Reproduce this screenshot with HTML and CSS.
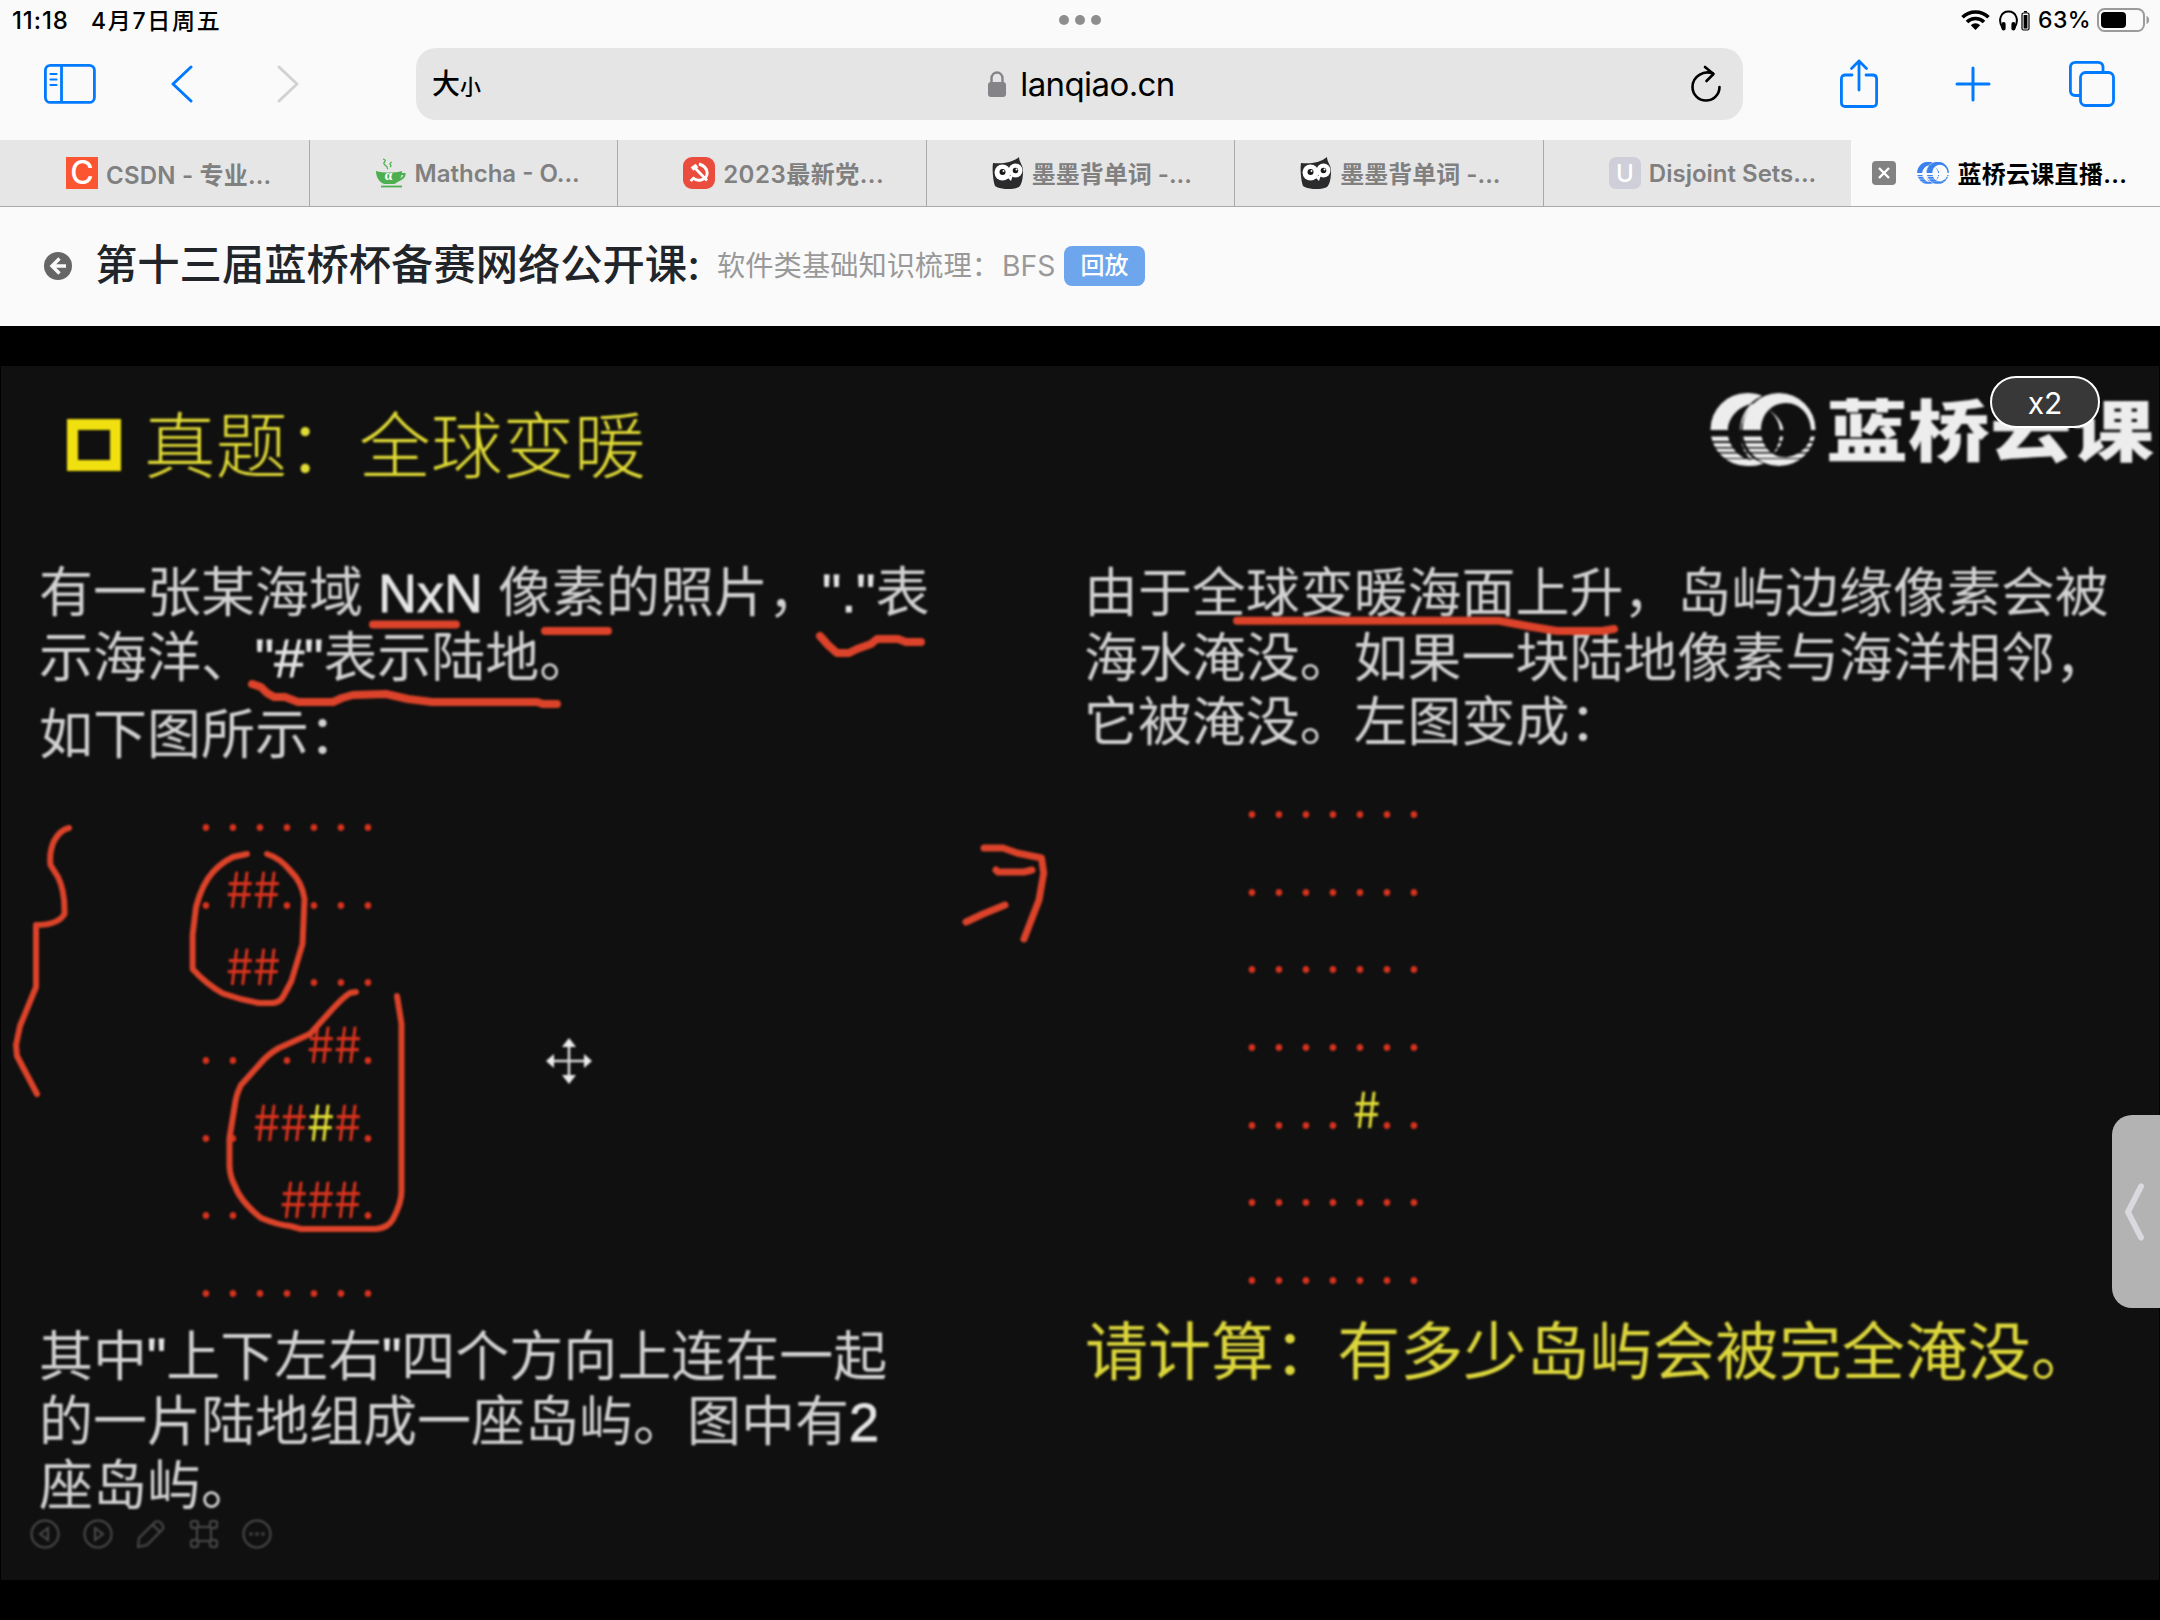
FILE: index.html
```html
<!DOCTYPE html>
<html lang="zh-CN">
<head>
<meta charset="utf-8">
<title>蓝桥云课直播</title>
<link rel="stylesheet" href="styles.css">
</head>
<body>
<svg class="defs" width="0" height="0" aria-hidden="true">
  <defs>
    <mask id="waves" maskUnits="userSpaceOnUse" x="0" y="0" width="106" height="74">
      <path fill="#fff" d="M0 0H106V37H0zM0 43.500H106V48H0zM0 50H106V54H0zM0 55.500H106V59H0zM0 60.500H106V65H0zM0 66H106V74H0z"/>
    </mask>
    <symbol id="rings" viewBox="0 0 106 74">
      <g mask="url(#waves)" fill="currentColor" fill-rule="evenodd">
        <path d="M37 0C43 0 49 1 52 3C38 9 30 22 30 37C30 53 38 66 54 70C48 73 43 73 37 73A36.500 36.500 0 0 1 37 0zM48 10C30 12 18 24 18 37C18 53 30 67 42 67C26 56 26 20 48 10z" fill-rule="nonzero"/>
        <path d="M69 0A36.500 36.500 0 1 1 69 73A36.500 36.500 0 1 1 69 0zM76 10C61 10 51 22 51 37C51 55 64 66 78 64C94 61 101 50 101 38C101 22 90 10 76 10z"/>
        <path d="M59 17C68 23 74 32 73.500 40C73 50 69 56 63 61C68 54 70 47 70 39C70 30 66 23 59 17z"/>
      </g>
      <path d="M18 37C19 24 28 14 41 11C34 18 30 27 30 37zM18 43C20 53 26 60 33 63C31 57 30 50 30 43z" fill="var(--hole)"/>
    </symbol>
    <symbol id="owl" viewBox="0 0 32 32">
      <path fill="#2b2b2d" d="M1 6C10 7 20 6 27 0C27 5 31 8 31 14C31 21 30 27 27 30C21 33 9 33 3 29C1 24 0 12 1 6z"/>
      <circle cx="10.500" cy="15.500" r="8" fill="#fff"/><circle cx="23.500" cy="13.500" r="7" fill="#fff"/>
      <path fill="#fff" d="M15 20L21 18L19 24z"/>
      <circle cx="10.500" cy="15" r="3" fill="#18181a"/><circle cx="23.500" cy="13.500" r="2.800" fill="#18181a"/>
      <circle cx="11.500" cy="14" r="1" fill="#fff"/><circle cx="24.500" cy="12.500" r="1" fill="#fff"/>
    </symbol>
  </defs>
</svg>

<header class="status">
  <span class="clock">11:18</span>
  <span class="date">4月7日周五</span>
  <span class="multitask"><i></i><i></i><i></i></span>
  <span class="indicators">
    <svg width="29" height="20" viewBox="0 0 29 20" fill="none" stroke="#000" stroke-width="3.600"><path d="M1.500 7.300A18.500 18.500 0 0 1 27.500 7.300M6 12A12 12 0 0 1 23 12"/><path d="M14.500 20L9.800 15.200A6.700 6.700 0 0 1 19.200 15.200z" fill="#000" stroke="none"/></svg>
    <svg class="phones" width="31" height="21" viewBox="0 0 31 21"><path d="M3.500 18C-1.500 10 2 1.500 9.500 1.500S20.500 10 15.500 18" fill="none" stroke="#000" stroke-width="2"/><rect x="2.600" y="12" width="4" height="8.500" rx="2"/><rect x="12.400" y="12" width="4" height="8.500" rx="2"/><rect x="23" y="3" width="7" height="17" rx="1.500" fill="none" stroke="#000" stroke-width="1.200"/><rect x="24.600" y="5" width="3.800" height="13.500"/><rect x="25" y="1" width="3" height="1.500"/></svg>
    <span class="percent">63%</span>
    <svg class="battery" width="53" height="24" viewBox="0 0 53 24"><rect x="1" y="1" width="46" height="22" rx="6.500" fill="none" stroke="#9b9b9b" stroke-width="2"/><rect x="4" y="4" width="25" height="16" rx="4"/><path d="M49.500 8C53 9 53 15 49.500 16z" fill="#9b9b9b"/></svg>
  </span>
</header>

<nav class="toolbar">
  <svg class="t-side" width="52" height="40" viewBox="0 0 52 40" fill="none" stroke="#007aff" stroke-width="2.800"><rect x="1.400" y="1.400" width="49" height="37" rx="5"/><path d="M17.500 1.400V38.400"/><path d="M6.500 10H12.500M6.500 15.500H12.500M6.500 21H12.500" stroke-width="2.200" stroke-linecap="round"/></svg>
  <svg class="t-back" width="22" height="38" viewBox="0 0 22 38" fill="none" stroke="#007aff" stroke-width="3" stroke-linecap="round" stroke-linejoin="round"><path d="M20 2L2 19L20 36"/></svg>
  <svg class="t-next" width="22" height="38" viewBox="0 0 22 38" fill="none" stroke="#d2d2d2" stroke-width="3" stroke-linecap="round" stroke-linejoin="round"><path d="M2 2L20 19L2 36"/></svg>
  <div class="address">
    <span class="size"><b>大</b><small>小</small></span>
    <span class="host"><svg width="18" height="26" viewBox="0 0 18 26"><rect y="11" width="18" height="15" rx="3" fill="#848488"/><path d="M3.500 12V7.500C3.500 -.5 14.500 -.5 14.500 7.500V12" fill="none" stroke="#848488" stroke-width="2.400"/></svg><em>lanqiao.cn</em></span>
    <svg class="reload" width="32" height="38" viewBox="0 0 32 38" fill="none" stroke="#000" stroke-width="2.600" stroke-linecap="round" stroke-linejoin="round"><path d="M23 8.500C14 5 2.500 11 2.500 22A13.500 13.500 0 0 0 29.500 22"/><path d="M15 2L23.500 9L16.500 16"/></svg>
  </div>
  <svg class="t-share" width="38" height="50" viewBox="0 0 38 50" fill="none" stroke="#007aff" stroke-width="2.800" stroke-linecap="round" stroke-linejoin="round"><path d="M12 16H5.400Q1.400 16 1.400 20V43.500Q1.400 47.500 5.400 47.500H32.600Q36.600 47.500 36.600 43.500V20Q36.600 16 32.600 16H26M19 31V2M11.500 9.500L19 2L26.500 9.500"/></svg>
  <svg class="t-add" width="36" height="36" viewBox="0 0 36 36" stroke="#007aff" stroke-width="3" stroke-linecap="round"><path d="M18 2V34M2 18H34"/></svg>
  <svg class="t-tabs" width="46" height="46" viewBox="0 0 46 46" fill="none" stroke="#007aff" stroke-width="2.800"><path d="M11 34.500H6.500Q1.400 34.500 1.400 29.500V6.500Q1.400 1.400 6.500 1.400H29Q34 1.400 34 6.500V11"/><rect x="11.500" y="11.500" width="33" height="33" rx="5"/></svg>
</nav>

<div class="tabs">
  <div class="tab"><span class="fav csdn">C</span><span class="name n1">CSDN - 专业...</span></div>
  <div class="tab"><svg class="fav" viewBox="0 0 32 32"><g fill="none" stroke="#4caf50"><path d="M8 2C14 4 6 5 10 8S11 10 13 12M17 5C12 7 18 8 15 10" stroke-width="1.300"/><path d="M25 17H29.500Q30 21 22 24" stroke-width="2.200"/><path d="M6 29.500H27" stroke-width="1.800"/></g><path fill="#4caf50" d="M1 14C8 16 20 16 27 14C27 21 23 26 19 27H9C4 25 1 20 1 14z"/><text x="9.500" y="23" font-family="Liberation Serif, serif" font-size="14" font-weight="700" fill="#fff">α</text></svg><span class="name n2">Mathcha - O...</span></div>
  <div class="tab"><svg class="fav" viewBox="0 0 32 32"><rect width="32" height="32" rx="9" fill="#ea4d3d"/><g fill="none" stroke="#fff"><path d="M16 7C26 10 27 21 18 23Q13 24 9.500 20.500" stroke-width="3"/><path d="M9 12L14 8.500" stroke-width="4.500"/><path d="M12.500 11.500L24 23.500M11 21L7.500 24" stroke-width="2.800"/></g></svg><span class="name cjk n3">2023最新党...</span></div>
  <div class="tab"><svg class="fav"><use href="#owl"/></svg><span class="name cjk">墨墨背单词 -...</span></div>
  <div class="tab"><svg class="fav"><use href="#owl"/></svg><span class="name cjk">墨墨背单词 -...</span></div>
  <div class="tab"><span class="fav letter">U</span><span class="name n6">Disjoint Sets...</span></div>
  <div class="tab active"><svg class="close" width="24" height="24" viewBox="0 0 24 24"><rect width="24" height="24" rx="4" fill="#828282"/><path d="M7 7L17 17M17 7L7 17" stroke="#fff" stroke-width="2.400"/></svg><svg class="fav blue"><use href="#rings"/></svg><span class="name cjk n7">蓝桥云课直播...</span></div>
</div>

<section class="course">
  <svg width="28" height="28" viewBox="0 0 28 28"><circle cx="14" cy="14" r="14" fill="#666"/><path d="M15.500 6.500L8 14L15.500 21.500M8.500 14H22" fill="none" stroke="#fafafa" stroke-width="3.400"/></svg>
  <h1>第十三届蓝桥杯备赛网络公开课:</h1>
  <p>软件类基础知识梳理：<span>BFS</span></p>
  <span class="replay">回放</span>
</section>

<main class="player">
  <div class="slide">
    <div class="sheet">
      <div class="left">
        <div class="heading"><i class="bullet"></i><h2>真题：全球变暖</h2></div>
        <div class="para"><p>有一张某海域 <b>NxN</b> 像素的照片，<b>"."</b>表</p><p>示海洋、<b>"#"</b>表示陆地。</p><p class="gap">如下图所示：</p></div>
        <div class="map">
          <div><i>.</i><i>.</i><i>.</i><i>.</i><i>.</i><i>.</i><i>.</i></div>
          <div><i>.</i><i class="h">#</i><i class="h">#</i><i>.</i><i>.</i><i>.</i><i>.</i></div>
          <div><i></i><i class="h">#</i><i class="h">#</i><i></i><i>.</i><i>.</i><i>.</i></div>
          <div><i>.</i><i>.</i><i></i><i>.</i><i class="h">#</i><i class="h">#</i><i>.</i></div>
          <div><i>.</i><i>.</i><i class="h">#</i><i class="h">#</i><i class="h keep">#</i><i class="h">#</i><i>.</i></div>
          <div><i>.</i><i>.</i><i></i><i class="h">#</i><i class="h">#</i><i class="h">#</i><i>.</i></div>
          <div><i>.</i><i>.</i><i>.</i><i>.</i><i>.</i><i>.</i><i>.</i></div>
        </div>
        <div class="para foot"><p>其中<b>"</b>上下左右<b>"</b>四个方向上连在一起</p><p>的一片陆地组成一座岛屿。图中有<b>2</b></p><p>座岛屿。</p></div>
        <div class="tools">
          <svg viewBox="0 0 30 30"><circle cx="15" cy="15" r="13.500"/><path d="M18 9V21L10 15z"/></svg>
          <svg viewBox="0 0 30 30"><circle cx="15" cy="15" r="13.500"/><path d="M12 9V21L20 15z"/></svg>
          <svg viewBox="0 0 30 30"><path d="M2 28L3 19L19 3Q22 1 25 4T27 10L11 26zM17 6L24 13"/></svg>
          <svg viewBox="0 0 30 30"><path d="M9 8V4Q9 2 7 2H4Q2 2 2 4V7Q2 9 4 9H8V21H4Q2 21 2 23V26Q2 28 4 28H7Q9 28 9 26V22H21V26Q21 28 23 28H26Q28 28 28 26V23Q28 21 26 21H22V9H26Q28 9 28 7V4Q28 2 26 2H23Q21 2 21 4V8z"/></svg>
          <svg viewBox="0 0 30 30"><circle cx="15" cy="15" r="13.500"/><path d="M7.500 15H10.500M13.500 15H16.500M19.500 15H22.500" stroke-width="3"/></svg>
        </div>
      </div>
      <div class="right">
        <div class="brand"><svg width="106" height="74"><use href="#rings"/></svg><strong>蓝桥云课</strong></div>
        <div class="para"><p>由于全球变暖海面上升，岛屿边缘像素会被</p><p>海水淹没。如果一块陆地像素与海洋相邻，</p><p>它被淹没。左图变成：</p></div>
        <div class="map">
          <div><i>.</i><i>.</i><i>.</i><i>.</i><i>.</i><i>.</i><i>.</i></div>
          <div><i>.</i><i>.</i><i>.</i><i>.</i><i>.</i><i>.</i><i>.</i></div>
          <div><i>.</i><i>.</i><i>.</i><i>.</i><i>.</i><i>.</i><i>.</i></div>
          <div><i>.</i><i>.</i><i>.</i><i>.</i><i>.</i><i>.</i><i>.</i></div>
          <div><i>.</i><i>.</i><i>.</i><i>.</i><i class="h keep">#</i><i>.</i><i>.</i></div>
          <div><i>.</i><i>.</i><i>.</i><i>.</i><i>.</i><i>.</i><i>.</i></div>
          <div><i>.</i><i>.</i><i>.</i><i>.</i><i>.</i><i>.</i><i>.</i></div>
        </div>
        <p class="ask">请计算：有多少岛屿会被完全淹没。</p>
      </div>
      <svg class="ink" width="2160" height="1214" viewBox="0 366 2160 1214">
        <path d="M373 624.500H456M545 631H608"/>
        <path d="M252 684L261 687L267 693L274 697H285L298 702H333L342 698L353 695L386 694L408 699L432 702H537L543 704H557"/>
        <path d="M820 636L828 645L837 653H849L857 649L871 644L877 639H898L906 642H921"/>
        <path d="M1237 620.700H1499L1530 626.500L1557 631H1602L1614 629"/>
        <path stroke-width="6" d="M69 828Q60 830 54 841Q49 852 50.500 865L58 877Q65 891 64.500 914Q58 925 36 925V987L20 1026L16 1045L17 1056L37 1094"/>
        <path stroke-width="6" d="M247 854L233 857Q221 863 213 872Q202 884 196 907L192.600 935V969Q206 984 223 993.500Q241 1000 259 1003H273Q281 1002 284 995L291.400 981L302.500 944L304.500 899Q302 882 290.600 871Q280 858 267 854"/>
        <path stroke-width="6" d="M356 992L350 993Q342 998 328 1014L310 1034L279 1048Q268 1054 259 1065L241 1085Q236 1095 235 1104L229.500 1138V1166Q230 1177 235 1186Q240 1201 261 1218Q278 1225 290 1226L301 1229H376Q388 1228 393 1219Q402 1202 401.500 1190V1024L397 996"/>
        <path stroke-width="7" d="M984 848H1003L1017 853L1041.500 858L1043.700 873L1039 900L1024 939M996 870L998 872H1024L1032 870M966 922L983 914L1005 905"/>
      </svg>
      <svg class="move" width="46" height="46" viewBox="0 0 46 46"><path d="M23 4V42M4 23H42" stroke="#ddd" stroke-width="2.500"/><path fill="#eee" d="M23 0L30 9H16zM23 46L16 37H30zM0 23L8 16V30zM46 23L38 30V16z"/></svg>
    </div>
    <span class="speed">x2</span>
  </div>
  <div class="drawer"><svg width="22" height="58" viewBox="0 0 22 58"><path d="M17 3.500L4 29L17 54.500" fill="none" stroke="#d9d9de" stroke-width="6" stroke-linecap="round" stroke-linejoin="round"/></svg></div>
</main>
</body>
</html>
```
FILE: styles.css
```css
* { box-sizing: border-box; }
body {
  margin: 0;
  width: 2160px;
  height: 1620px;
  overflow: hidden;
  background: #fafafa;
  color: #000;
  font-family: Inter, "Noto Sans CJK SC", sans-serif;
}
h1, h2, p { margin: 0; font-weight: 400; }
i, em { font-style: normal; }
svg { display: block; flex: none; }
.defs { position: absolute; }

/* status bar */
.status { position: relative; display: flex; align-items: center; height: 40px; padding-left: 12px; font-size: 23px; font-weight: 500; }
.clock { width: 79px; font-size: 24px; letter-spacing: .9px; }
.date { padding-bottom: 3px; letter-spacing: 1.700px; white-space: nowrap; }
.multitask { position: absolute; left: 1059px; top: 15px; display: flex; gap: 6px; }
.multitask i { width: 10px; height: 10px; border-radius: 50%; background: #8e8e8e; }
.indicators { margin-left: auto; display: flex; align-items: center; padding-right: 10px; }
.phones { margin-left: 9px; }
.percent { width: 55px; margin-left: 8px; letter-spacing: .4px; }
.battery { margin-left: 4px; }

/* toolbar */
.toolbar { display: flex; align-items: center; height: 100px; padding: 0 45px; padding-bottom: 12px; }
.t-side { margin-left: -1px; }
.t-back { margin-left: 75px; }
.t-next { margin-left: 84px; }
.address { position: relative; display: flex; align-items: center; justify-content: center; width: 1328px; height: 72px; margin-left: 117px; margin-top: 0; border-radius: 20px; background: #e5e5e5; }
.size { position: absolute; left: 16px; top: 15px; line-height: 42px; font-weight: 500; }
.size b { font-size: 28px; font-weight: 500; }
.size small { font-size: 21px; font-weight: 500; }
.host { display: flex; align-items: center; gap: 14px; margin-left: 4px; }
.host em { font-size: 33px; line-height: 40px; letter-spacing: -.6px; }
.reload { position: absolute; right: 21px; top: 17px; }
.t-share { margin-left: 97px; }
.t-add { margin-left: 77px; }
.t-tabs { margin-left: 78px; }

/* tab strip */
.tabs { display: grid; grid-template-columns: repeat(7, 1fr); height: 67px; border-bottom: 1px solid #aaa; background: #e6e6e6; }
.tab { display: flex; align-items: center; padding-left: 65px; overflow: hidden; border-left: 1px solid #aaa; color: #808080; font-size: 24px; font-weight: 600; white-space: nowrap; }
.tab:first-child { padding-left: 66px; border-left: 0; }
.tab.active { padding-left: 21px; border-left: 0; background: #fafafa; color: #000; }
.cjk { padding-bottom: 2px; }
.n1 { letter-spacing: .2px; }
.n3 { letter-spacing: .5px; }
.n7 { letter-spacing: .3px; }
.fav { width: 32px; height: 32px; flex: none; margin-right: 8px; }
.close { margin-right: 21px; }
.csdn { background: #fc5531; color: #fff; font-size: 32px; line-height: 32px; text-align: center; font-weight: 500; }
.letter { border-radius: 7px; background: #cfcfd9; color: #fff; font-size: 24px; font-weight: 500; line-height: 33px; text-align: center; }
.blue { color: #3b82ee; --hole: #fafafa; }

/* course heading */
.course { display: flex; align-items: center; height: 119px; padding: 0 0 1px 44px; }
.course h1 { margin: -2px 0 0 23px; width: 622px; color: #212529; font-size: 42.300px; font-weight: 500; line-height: 60px; white-space: nowrap; }
.course p { width: 347px; color: #999; font-size: 28.300px; line-height: 40px; white-space: nowrap; }
.course p span { margin-left: 2px; }
.replay { width: 81px; height: 40px; border-radius: 8px; background: #6ea6ee; color: #fff; font-size: 24px; font-weight: 500; line-height: 40px; text-align: center; }

/* video */
.player { position: relative; height: 1294px; padding: 40px 1px; background: #000; }
.slide { position: relative; height: 1214px; background: #101010; }
.sheet { display: grid; grid-template-columns: 1083px 1fr; height: 1214px; margin: 0 -1px; padding-left: 1px; overflow: hidden; filter: blur(.9px); font-family: "Liberation Sans", "Noto Sans CJK SC", sans-serif; font-weight: 300; }
.left { padding-left: 38px; }
.heading { display: flex; align-items: center; height: 160px; padding: 0 0 2px 28px; }
.bullet { width: 54px; height: 52px; border: 11px solid #f0e010; }
.heading h2 { margin-left: 23px; padding-bottom: 9px; font-size: 71.700px; font-weight: 300; color: #e2dc36; white-space: nowrap; }
.para { height: 207px; margin-top: 35px; color: #d2d2d2; font-size: 54px; line-height: 65px; white-space: nowrap; }
.para b { font-weight: 400; color: #e6e6e6; -webkit-text-stroke: .8px #e6e6e6; }
.gap { margin-top: 12px; }
.map { height: 544px; margin-left: 161px; color: #d8331e; font-family: "Noto Sans CJK SC", sans-serif; font-size: 50px; font-weight: 400; line-height: 77.700px; }
.left .map { margin: 2px 0 0 160px; }
.map div { display: flex; height: 77.700px; }
.map i { width: 27px; height: 77.700px; }
.h { display: flex; justify-content: center; }
.map .keep { color: #e2dc36; }
.left .foot { height: 194px; margin-top: 11px; line-height: 64.500px; }
.tools { display: flex; gap: 23px; margin: 0 0 0 -9px; }
.tools svg { width: 30px; height: 30px; fill: none; stroke: #4c4c4c; stroke-width: 2; }
.brand { display: flex; height: 160px; margin-left: 626px; padding-top: 27px; color: #ededed; --hole: #101010; }
.brand strong { margin-left: 10px; height: 74px; font-family: "Noto Sans CJK SC", sans-serif; font-size: 82px; font-weight: 900; line-height: 68px; white-space: nowrap; transform: scaleY(.82); }
.right .para { height: 196px; line-height: 64.700px; font-size: 53.950px; }
.ask { margin: 18px 0 0 1px; color: #dcd63c; font-size: 63.070px; line-height: 66px; white-space: nowrap; }
.ink { position: absolute; left: 0; top: 0; fill: none; stroke: #dc432a; stroke-width: 8; stroke-linecap: round; stroke-linejoin: round; }
.move { position: absolute; left: 546px; top: 672px; }
.speed { position: absolute; left: 1989px; top: 10px; width: 110px; height: 52px; border: 2px solid #fff; border-radius: 26px; background: #383838; color: #fff; font-size: 30px; line-height: 50px; text-align: center; }
.drawer { position: absolute; right: 0; top: 789px; display: flex; align-items: center; width: 48px; height: 193px; padding-left: 12px; border-radius: 20px 0 0 20px; background: #b3b3b3; }
```
